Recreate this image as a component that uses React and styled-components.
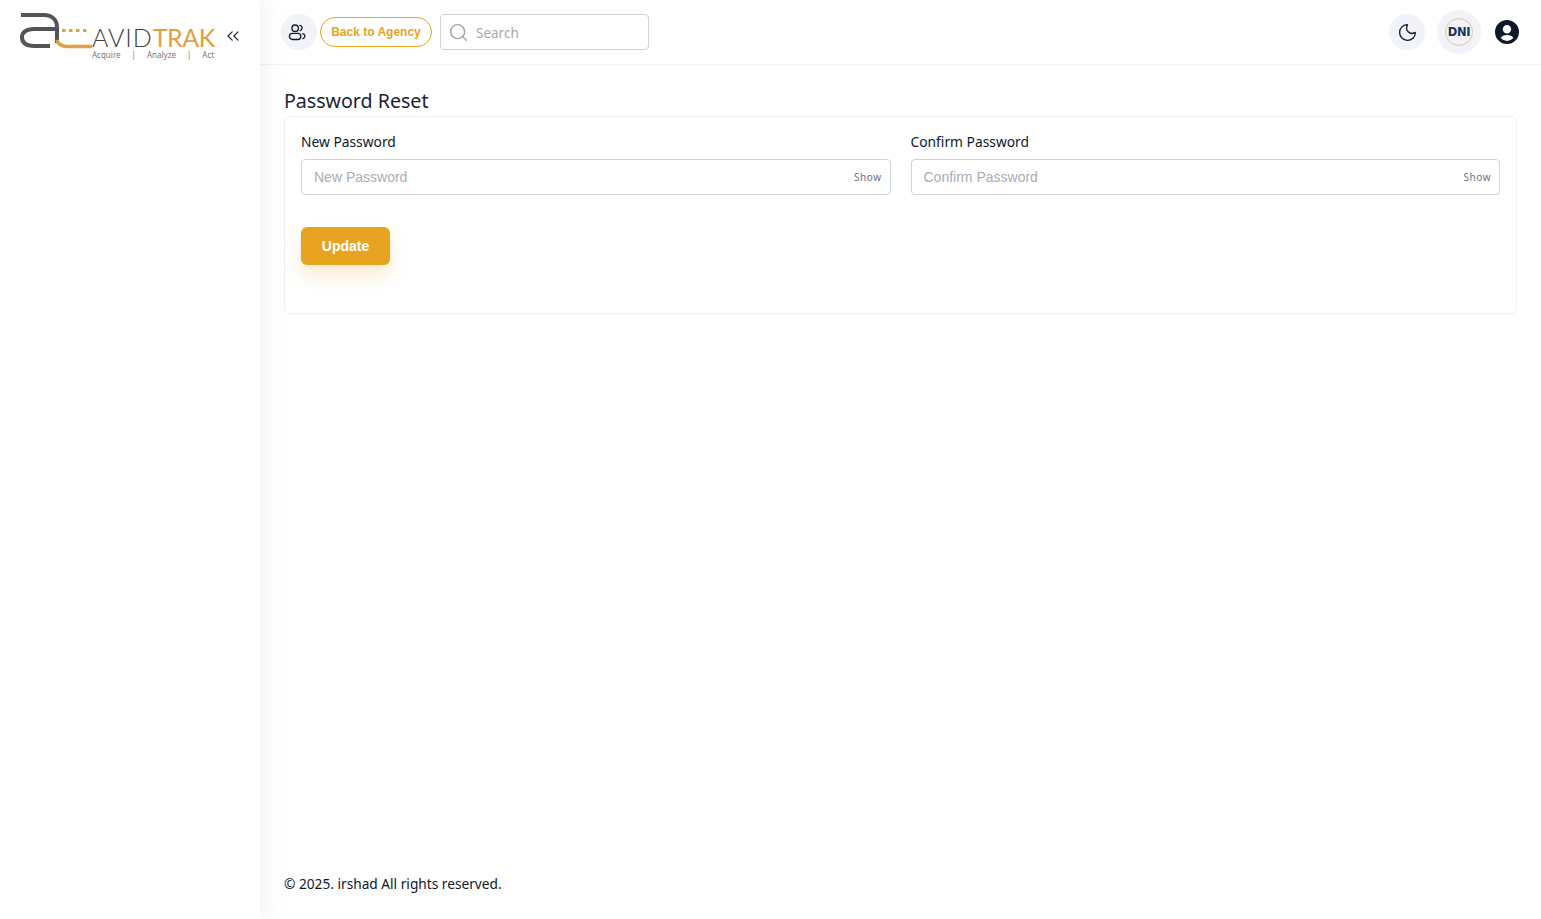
import React from 'react';
import styled, { createGlobalStyle } from 'styled-components';
import { Search, Moon, ChevronsLeft } from 'lucide-react';

const GlobalStyle = createGlobalStyle`
  html, body { margin: 0; padding: 0; height: 100%; background: #fff; }
  body { font-family: "Noto Sans", sans-serif; color: #0f172a; }
  #root { height: 100%; }
  * { box-sizing: border-box; }
`;

const Layout = styled.div`
  display: flex;
  height: 919px;
  overflow: hidden;
`;

const Sidebar = styled.aside`
  width: 260px;
  flex-shrink: 0;
  height: 100%;
  background: #fff;
  box-shadow: 8px 0 20px rgba(120, 130, 170, 0.08);
  z-index: 1;
`;

const SidebarHead = styled.div`
  display: flex;
  align-items: flex-start;
  height: 65px;
  padding: 12px 0 0 20px;
`;

const Logo = styled.div`
  display: grid;
  grid-template-columns: 72px auto;
  width: 196px;
  height: 50px;
`;

const LogoWords = styled.div`
  display: flex;
  flex-direction: column;
  padding-top: 13px;
`;

const Brand = styled.div`
  font-family: "Lato", sans-serif;
  font-weight: 300;
  font-size: 25px;
  line-height: 24px;
  letter-spacing: 0.9px;
  color: #3f4347;
  white-space: nowrap;
`;

const BrandAccent = styled.span`
  color: #e2a044;
  font-weight: 400;
  letter-spacing: -0.4px;
`;

const Tagline = styled.div`
  display: flex;
  gap: 11px;
  margin-top: 1px;
  font-family: "Noto Sans", sans-serif;
  font-size: 8px;
  line-height: 10px;
  color: #77797c;
  white-space: nowrap;
`;

const Collapse = styled.span`
  display: flex;
  margin: 14px 0 0 7px;
  color: #1e293b;
`;

const Main = styled.div`
  flex: 1;
  min-width: 0;
  display: flex;
  flex-direction: column;
`;

const Topbar = styled.header`
  display: flex;
  align-items: center;
  height: 65px;
  padding: 0 22px 0 21px;
  border-bottom: 1px solid #f1f3f6;
`;

const RoundButton = styled.span`
  display: flex;
  align-items: center;
  justify-content: center;
  flex-shrink: 0;
  width: ${(p) => p.$size || 36}px;
  height: ${(p) => p.$size || 36}px;
  margin-left: ${(p) => p.$gap || 0}px;
  border-radius: 50%;
  background: ${(p) => (p.$plain ? 'transparent' : '#f1f3f9')};
  color: #0f172a;
`;

const PeopleSvg = styled.svg`
  margin-right: 3px;
`;

const BackButton = styled.button`
  width: 112px;
  height: 30px;
  margin-left: 3px;
  padding: 0;
  border: 1px solid #e8a321;
  border-radius: 15px;
  background: #fff;
  color: #e8a321;
  font-family: "Liberation Sans", sans-serif;
  font-weight: 700;
  font-size: 12px;
  white-space: nowrap;
`;

const SearchBox = styled.label`
  display: flex;
  align-items: center;
  width: 209px;
  height: 36px;
  margin-left: 8px;
  padding-left: 7px;
  border: 1px solid #ced4da;
  border-radius: 4px;
  color: #9ca3af;
`;

const SearchInput = styled.input`
  flex: 1;
  min-width: 0;
  margin-left: 7px;
  padding: 2px 0 0 0;
  border: 0;
  outline: 0;
  background: none;
  font-family: "Noto Sans", sans-serif;
  font-size: 13.5px;
  &::placeholder { color: #a3a9b3; opacity: 1; }
`;

const TopRight = styled.div`
  display: flex;
  align-items: center;
  margin-left: auto;
`;

const DniBadge = styled.span`
  display: flex;
  align-items: center;
  justify-content: center;
  width: 28px;
  height: 28px;
  border-radius: 50%;
  border: 1px solid #e9c4a4;
  font-family: "DejaVu Sans", sans-serif;
  font-weight: 700;
  font-size: 11.5px;
  letter-spacing: -0.3px;
  color: #17335a;
`;

const Content = styled.main`
  flex: 1;
  display: flex;
  flex-direction: column;
  padding: 20px 24px 0 24px;
`;

const PageTitle = styled.h1`
  margin: 0;
  font-weight: 400;
  font-size: 19.6px;
  line-height: 31px;
  color: #1a2333;
`;

const Card = styled.section`
  height: 198px;
  padding: 16px;
  border: 1px solid #eef0f3;
  border-radius: 6px;
  background: #fff;
`;

const FieldRow = styled.div`
  display: grid;
  grid-template-columns: 1fr 1fr;
  gap: 20px;
`;

const Field = styled.div`
  display: flex;
  flex-direction: column;
`;

const FieldLabel = styled.label`
  margin-bottom: 8px;
  font-size: 13.8px;
  line-height: 18px;
  color: #0f172a;
`;

const InputWrap = styled.div`
  position: relative;
`;

const PasswordInput = styled.input`
  display: block;
  width: 100%;
  height: 36px;
  padding: 0 48px 0 12px;
  border: 1px solid #ced4da;
  border-radius: 4px;
  outline: 0;
  font-family: "Liberation Sans", sans-serif;
  font-size: 14px;
  &::placeholder { color: #a8adb5; opacity: 1; }
`;

const ShowToggle = styled.span`
  position: absolute;
  top: 50%;
  right: 9px;
  transform: translateY(-50%);
  font-size: 10px;
  letter-spacing: 0.5px;
  color: #6b7280;
`;

const UpdateButton = styled.button`
  display: block;
  width: 89px;
  height: 38px;
  margin-top: 32px;
  border: 0;
  border-radius: 6px;
  background: #e8a321;
  color: #fff;
  font-family: "Liberation Sans", sans-serif;
  font-weight: 700;
  font-size: 14px;
  box-shadow: 0 10px 18px rgba(232, 163, 33, 0.22);
`;

const Footer = styled.footer`
  margin-top: auto;
  padding-bottom: 25px;
  font-size: 13.7px;
  line-height: 20px;
  color: #0f172a;
`;

const LogoMark = () => (
  <svg width="72" height="38" viewBox="0 0 72 38" fill="none">
    <path d="M1 3H24C32 3 37 8 37 15V31" stroke="#525558" strokeWidth="4" />
    <path d="M37 17H14C6 17 2 20.5 2 25.5C2 30.5 6 34 14 34H30" stroke="#525558" strokeWidth="4" />
    <path d="M37 28C38 32 42 34.5 47 34.5H72" stroke="#e2a044" strokeWidth="3.6" />
    <path d="M42 18.5H69" stroke="#e2a044" strokeWidth="3" strokeDasharray="3.5 3.5" />
  </svg>
);

const PeopleIcon = () => (
  <PeopleSvg width="19" height="19" viewBox="0 0 20 20" fill="none" stroke="#0f172a" strokeWidth="1.4" strokeLinecap="round">
    <circle cx="7.5" cy="5.5" r="3.4" />
    <rect x="1.5" y="11" width="12" height="6.4" rx="3.2" />
    <path d="M12.5 2.6C14.3 3 15.1 4.4 14.7 6C14.5 7 13.7 7.8 12.9 8" />
    <path d="M15.5 11.2C17.5 11.8 18.1 13.4 17.5 14.8C17.1 15.6 16.5 16.2 15.7 16.4" />
  </PeopleSvg>
);

const UserCircleIcon = () => (
  <svg width="24" height="24" viewBox="0 0 24 24">
    <path
      fill="#0f172a"
      fillRule="evenodd"
      d="M12 0a12 12 0 1 1 0 24a12 12 0 0 1 0-24ZM12 5a4.2 4.2 0 1 0 0 8.4a4.2 4.2 0 0 0 0-8.4ZM12 15c-3 0-5.4 1.2-6.4 3.1A9 9 0 0 0 12 21a9 9 0 0 0 6.4-2.9C17.4 16.2 15 15 12 15Z"
    />
  </svg>
);

const PasswordField = ({ label }) => (
  <Field>
    <FieldLabel>{label}</FieldLabel>
    <InputWrap>
      <PasswordInput type="password" placeholder={label} />
      <ShowToggle>Show</ShowToggle>
    </InputWrap>
  </Field>
);

const App = () => {
  return (
    <>
      <GlobalStyle />
      <Layout>
        <Sidebar>
          <SidebarHead>
            <Logo>
              <LogoMark />
              <LogoWords>
                <Brand>AVID<BrandAccent>TRAK</BrandAccent></Brand>
                <Tagline>
                  <span>Acquire</span><span>|</span><span>Analyze</span><span>|</span><span>Act</span>
                </Tagline>
              </LogoWords>
            </Logo>
            <Collapse><ChevronsLeft size={20} strokeWidth={1.5} /></Collapse>
          </SidebarHead>
        </Sidebar>
        <Main>
          <Topbar>
            <RoundButton><PeopleIcon /></RoundButton>
            <BackButton>Back to Agency</BackButton>
            <SearchBox>
              <Search size={21} strokeWidth={1.6} />
              <SearchInput placeholder="Search" />
            </SearchBox>
            <TopRight>
              <RoundButton><Moon size={21} strokeWidth={1.5} /></RoundButton>
              <RoundButton $size={44} $gap={12}><DniBadge>DNI</DniBadge></RoundButton>
              <RoundButton $size={24} $gap={14} $plain><UserCircleIcon /></RoundButton>
            </TopRight>
          </Topbar>
          <Content>
            <PageTitle>Password Reset</PageTitle>
            <Card>
              <FieldRow>
                <PasswordField label="New Password" />
                <PasswordField label="Confirm Password" />
              </FieldRow>
              <UpdateButton>Update</UpdateButton>
            </Card>
            <Footer>© 2025. irshad All rights reserved.</Footer>
          </Content>
        </Main>
      </Layout>
    </>
  );
};

export default App;
